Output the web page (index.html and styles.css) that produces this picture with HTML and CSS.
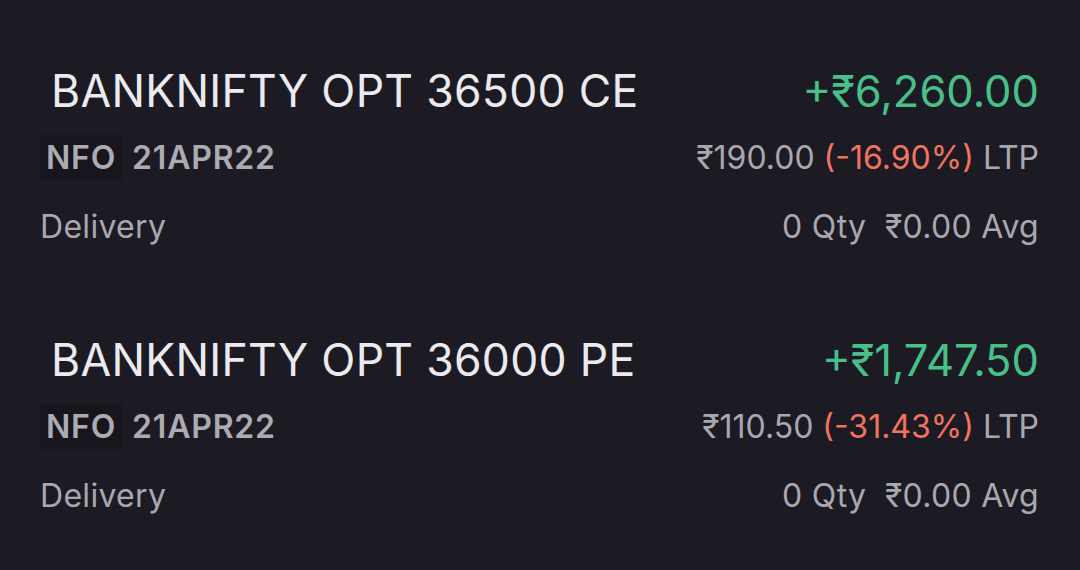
FILE: index.html
```html
<!DOCTYPE html>
<html>
<head>
<meta charset="utf-8">
<link rel="stylesheet" href="styles.css">
</head>
<body>
<div class="list">
  <div class="pos">
    <div class="row top">
      <span class="title">BANKNIFTY OPT 36500 CE</span>
      <span class="pnl">+₹6,260.00</span>
    </div>
    <div class="row mid">
      <span class="tags"><span class="badge">NFO</span><span class="expiry">21APR22</span></span>
      <span class="ltp">₹190.00 <span class="neg">(-16.90%)</span> LTP</span>
    </div>
    <div class="row bot">
      <span class="prod">Delivery</span>
      <span class="qty">0 Qty&nbsp; ₹0.00 Avg</span>
    </div>
  </div>
  <div class="pos">
    <div class="row top">
      <span class="title">BANKNIFTY OPT 36000 PE</span>
      <span class="pnl">+₹1,747.50</span>
    </div>
    <div class="row mid">
      <span class="tags"><span class="badge">NFO</span><span class="expiry">21APR22</span></span>
      <span class="ltp">₹110.50 <span class="neg">(-31.43%)</span> LTP</span>
    </div>
    <div class="row bot">
      <span class="prod">Delivery</span>
      <span class="qty">0 Qty&nbsp; ₹0.00 Avg</span>
    </div>
  </div>
</div>
</body>
</html>
```
FILE: styles.css
```css
html, body {
  margin: 0;
  padding: 0;
  background: #1c1b23;
  width: 1080px;
  height: 570px;
  overflow: hidden;
  font-family: Inter, "Noto Sans", sans-serif;
}
.list {
  display: flex;
  flex-direction: column;
  padding: 64px 41px 0 40px;
}
.pos {
  display: flex;
  flex-direction: column;
}
.pos + .pos {
  margin-top: 87px;
}
.row {
  display: flex;
  justify-content: space-between;
  align-items: center;
}
.top {
  height: 54px;
}
.title {
  margin-left: 11px;
  font-size: 44.5px;
  color: #ebeaee;
  letter-spacing: 0.3px;
}
.pnl {
  font-size: 43.5px;
  color: #48c08a;
}
.mid {
  margin-top: 15px;
  height: 48px;
}
.tags {
  display: flex;
  gap: 4px;
  font-size: 32px;
  font-weight: 600;
  color: #acabb1;
  letter-spacing: 0.8px;
}
.badge {
  background: #17161c;
  padding: 3px 6px;
  border-radius: 3px;
}
.expiry {
  padding: 3px 6px;
}
.ltp, .qty, .prod {
  font-size: 32px;
  color: #a9a8ae;
  letter-spacing: 0.3px;
}
.ltp {
  letter-spacing: 0;
}
.neg {
  color: #f2735e;
}
.bot {
  margin-top: 25px;
  height: 40px;
}
```
